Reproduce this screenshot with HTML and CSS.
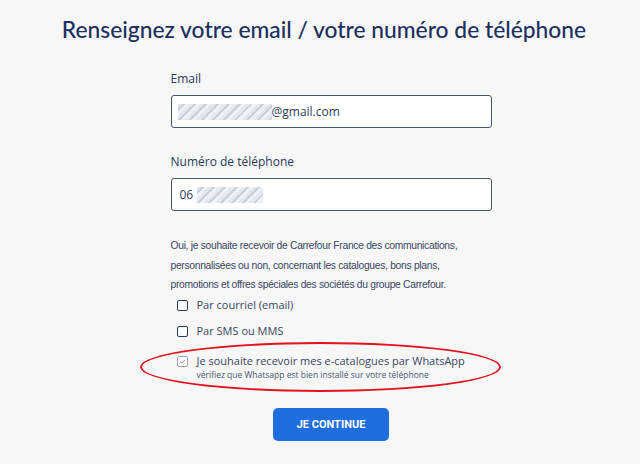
FILE: index.html
```html
<!DOCTYPE html>
<html lang="fr">

<head>
  <meta charset="UTF-8">
  <title>Renseignez votre email</title>
  <link rel="stylesheet" href="styles.css">
</head>

<body>
  <h1 class="title">Renseignez votre email / votre numéro de téléphone</h1>

  <main class="wrap">
    <form class="form">
      <label class="field">
        <span class="label">Email</span>
        <span class="input">
          <span class="blur blur-mail"></span>@gmail.com
        </span>
      </label>

      <label class="field">
        <span class="label">Numéro de téléphone</span>
        <span class="input">
          06 <span class="blur blur-tel"></span>
        </span>
      </label>

      <p class="consent">Oui, je souhaite recevoir de Carrefour France des communications, personnalisées ou non,
        concernant les catalogues, bons plans, promotions et offres spéciales des sociétés du groupe Carrefour.</p>

      <ul class="choices">
        <li class="choice">
          <span class="box"></span>
          <span>Par courriel (email)</span>
        </li>
        <li class="choice">
          <span class="box"></span>
          <span>Par SMS ou MMS</span>
        </li>
        <li class="choice choice-wa">
          <span class="box box-on">
            <svg viewBox="0 0 11 11" width="11" height="11">
              <path d="M3 5.6 L4.8 7.3 L8 3.8" fill="none" stroke="#8a93a6" stroke-width="1" />
            </svg>
          </span>
          <span>
            <span class="choice-main">Je souhaite recevoir mes e-catalogues par WhatsApp</span>
            <span class="hint">vérifiez que Whatsapp est bien installé sur votre téléphone</span>
          </span>
          <span class="circle"></span>
        </li>
      </ul>

      <div class="actions">
        <button type="button" class="btn">JE CONTINUE</button>
      </div>
    </form>
  </main>
</body>

</html>
```

FILE: styles.css
```css
body {
  margin: 0;
  background: #f7f7f7;
  font-family: "Open Sans", Arial, sans-serif;
  color: #33405a;
}

.title {
  margin: 15px 0 0;
  text-align: center;
  padding-left: 8px;
  font-family: Lato, "Open Sans", sans-serif;
  font-weight: 500;
  font-size: 22.8px;
  color: #1c2f5e;
}

.wrap {
  display: flex;
  justify-content: center;
  padding-left: 22px;
}

.form {
  width: 321px;
  margin-top: 27px;
}

.field {
  display: block;
  margin-bottom: 25px;
}

.label {
  display: block;
  font-size: 12px;
  color: #2b3a58;
  margin-bottom: 8px;
}

.input {
  display: flex;
  align-items: center;
  height: 31px;
  padding: 0 8px;
  background: #fff;
  border: 1px solid #47546e;
  border-radius: 3px;
  font-size: 12px;
  color: #2b3a58;
}

.blur {
  display: inline-block;
  height: 16px;
  background: repeating-linear-gradient(135deg, #e4e8ee 0 3px, #c9d0dc 3px 5px, #eef1f5 5px 8px);
}

.blur-mail {
  width: 94px;
  margin-left: -2px;
}

.blur-tel {
  width: 66px;
  margin-left: 4px;
}

.consent {
  max-width: 305px;
  margin: 0;
  font-family: "Liberation Sans", Arial, sans-serif;
  font-size: 10.3px;
  letter-spacing: -0.3px;
  line-height: 19.5px;
  color: #3a4662;
}

.choices {
  list-style: none;
  margin: 3px 0 0;
  padding: 0 0 0 6px;
}

.choice {
  display: flex;
  align-items: flex-start;
  gap: 9px;
  font-size: 11px;
  color: #3a4662;
  margin-bottom: 12px;
  line-height: 14px;
}

.choice:nth-child(2) {
  margin-bottom: 16px;
}

.box {
  width: 11px;
  height: 11px;
  box-sizing: border-box;
  border: 1px solid #2b3a58;
  border-radius: 2px;
  background: #fff;
  margin-top: 2px;
  flex-shrink: 0;
  position: relative;
}

.box-on {
  border-color: #9aa2b3;
}

.box-on svg {
  position: absolute;
  left: -1px;
  top: -1px;
}

.choice-wa {
  position: relative;
}

.choice-main {
  display: block;
}

.hint {
  display: block;
  font-size: 8.5px;
  line-height: 14px;
  color: #4a5670;
}

.circle {
  position: absolute;
  left: -37px;
  top: -12px;
  width: 357px;
  height: 46px;
  border: 2px solid #e3121c;
  border-radius: 50%;
  pointer-events: none;
}

.actions {
  display: flex;
  justify-content: center;
  margin-top: 26px;
}

.btn {
  width: 116px;
  height: 33px;
  background: #1f6ee0;
  color: #fff;
  border: none;
  border-radius: 5px;
  font-family: Roboto, Arial, sans-serif;
  font-weight: 700;
  font-size: 11px;
  cursor: pointer;
}
```
